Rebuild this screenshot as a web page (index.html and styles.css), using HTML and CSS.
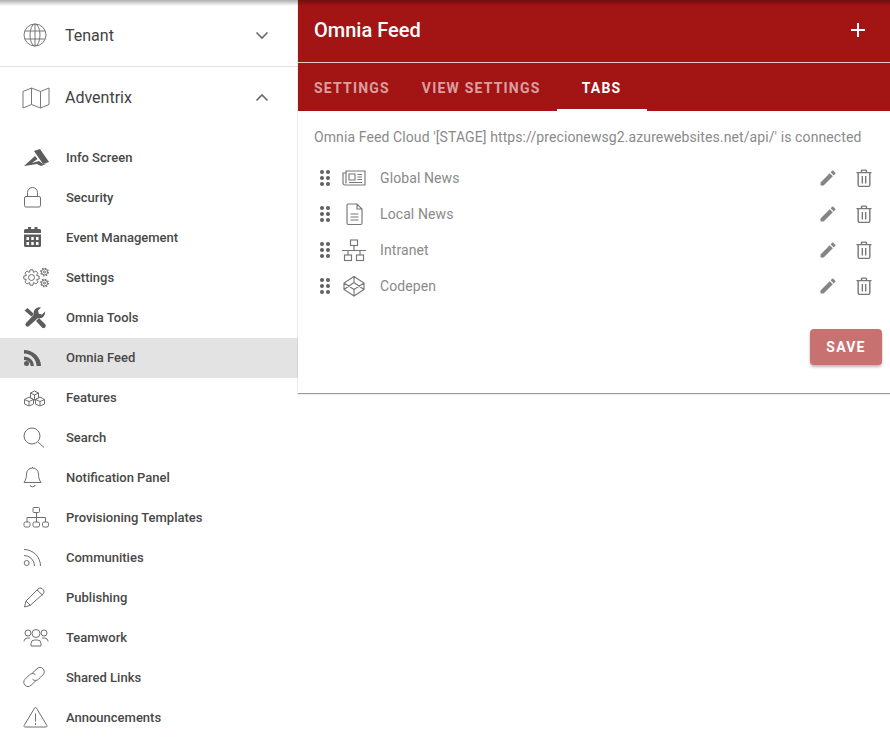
FILE: index.html
```html
<!DOCTYPE html>
<html lang="en">
<head>
<meta charset="utf-8">
<title>Omnia Feed</title>
<link rel="stylesheet" href="styles.css">
</head>
<body>
<div class="app">
  <nav class="sidebar">
    <div class="group group-tenant">
      <svg class="group-icon" viewBox="0 0 26 26"><circle cx="13" cy="13" r="11"/><ellipse cx="13" cy="13" rx="5" ry="11"/><path d="M3 9h20M3 17h20M13 2v22"/></svg>
      <span class="group-label">Tenant</span>
      <svg class="chev" viewBox="0 0 14 14"><path d="M1.5 4.5 7 10l5.5-5.5"/></svg>
    </div>
    <div class="group group-adv">
      <svg class="group-icon wide" viewBox="0 0 28 22"><path d="M1 4.5 9.500 1l9 3.500L27 1v16.500L18.500 21l-9-3.500L1 21zM9.500 1v16.500M18.500 4.500V21"/></svg>
      <span class="group-label">Adventrix</span>
      <svg class="chev" viewBox="0 0 14 14"><path d="M1.500 9.500 7 4l5.500 5.500"/></svg>
    </div>
    <ul class="menu">
      <li class="item"><span class="ico"><svg viewBox="0 0 26 26" class="solid"><path d="M11 7 17 5l9 13-6 2z"/><path d="M1 22 12 12l2.500 3L9 19l7-2 4 3 4-.5L18 22l-4-2z"/></svg></span><span>Info Screen</span></li>
      <li class="item"><span class="ico"><svg viewBox="0 0 26 26"><rect x="1.500" y="12.500" width="16" height="10.500" rx="1.500"/><path d="M4.500 12.500V8.500a5 5 0 0 1 10 0v4"/></svg></span><span>Security</span></li>
      <li class="item"><span class="ico"><svg viewBox="0 0 26 26" class="solid"><path fill-rule="evenodd" d="M5 3h3v2h3.500V3h3v2h1.500A1.500 1.500 0 0 1 18 6.500V9H1V6.500A1.500 1.500 0 0 1 2.500 5H5zM1 10.500h17V21.500a1.500 1.500 0 0 1-1.500 1.500h-14A1.500 1.500 0 0 1 1 21.500zM3.500 13v3H6v-3zm4.750 0v3h2.500v-3zm4.750 0v3H15.500v-3zM3.500 18v3H6v-3zm4.750 0v3h2.500v-3zm4.750 0v3H15.500v-3z"/></svg></span><span>Event Management</span></li>
      <li class="item"><span class="ico"><svg viewBox="0 0 26 26"><polygon transform="translate(8.500 13.500)" points="5.26,-1.920 7.660,-1.490 7.660,1.490 5.26,1.920 5.080,2.360 6.470,4.360 4.360,6.470 2.360,5.080 1.920,5.260 1.490,7.660 -1.490,7.660 -1.920,5.260 -2.360,5.080 -4.360,6.470 -6.470,4.360 -5.080,2.360 -5.260,1.920 -7.660,1.490 -7.660,-1.490 -5.260,-1.920 -5.080,-2.360 -6.470,-4.360 -4.360,-6.470 -2.360,-5.080 -1.920,-5.260 -1.490,-7.660 1.490,-7.660 1.920,-5.260 2.360,-5.080 4.360,-6.470 6.470,-4.360 5.080,-2.360"/><circle cx="8.500" cy="13.500" r="3"/><circle cx="21.500" cy="8" r="3"/><circle cx="21.500" cy="8" r="1"/><circle class="teeth" cx="21.500" cy="8" r="3.800"/><circle cx="21.500" cy="19" r="3"/><circle cx="21.500" cy="19" r="1"/><circle class="teeth" cx="21.500" cy="19" r="3.800"/></svg></span><span>Settings</span></li>
      <li class="item"><span class="ico"><svg viewBox="0 0 26 26" class="solid"><path d="M22 7.500l-3 3-3.200-.7-.8-3.200 3-3a5.500 5.500 0 0 0-7 7L3 19a2 2 0 0 0 3 3l9-8a5.500 5.500 0 0 0 7-6.500z"/><path d="M1.500 6.500 4.500 4l6.500 6-2.500 2.500zM13 17l3-3 6 6a2 2 0 0 1-3 3.500z"/></svg></span><span>Omnia Tools</span></li>
      <li class="item active"><span class="ico"><svg viewBox="0 0 26 26" class="solid"><circle cx="3.500" cy="19.500" r="2.500"/><path d="M1 6v3.500A12.500 12.500 0 0 1 13.500 22H18A17 16 0 0 0 1 6z"/><path d="M1 12.500V16a6 6 0 0 1 6.500 6H11A10 9.500 0 0 0 1 12.500z"/></svg></span><span>Omnia Feed</span></li>
      <li class="item"><span class="ico"><svg viewBox="0 0 26 26"><path d="M11.500 7l4 2v5l-4 2-4-2V9zM7.500 9l4 2 4-2M11.500 11v5"/><path d="M6 13l4.500 2.500V20L6 22l-4.500-2v-4.500zM1.500 15.500l4.500 2 4.500-2M6 17.500V22"/><path d="M17 13l4.500 2.500V20L17 22l-4.500-2v-4.500zM12.500 15.500l4.500 2 4.500-2M17 17.500V22"/></svg></span><span>Features</span></li>
      <li class="item"><span class="ico"><svg viewBox="0 0 26 26"><circle cx="9" cy="12" r="8"/><path d="M15 18l6 5.500"/></svg></span><span>Search</span></li>
      <li class="item"><span class="ico"><svg viewBox="0 0 26 26"><path d="M9.500 4a6 6 0 0 0-6 6c0 4-1 6.500-2.500 8.500h17c-1.500-2-2.500-4.500-2.500-8.500a6 6 0 0 0-6-6zM9.500 3v1M7 21a2.500 1.800 0 0 0 5 0"/></svg></span><span>Notification Panel</span></li>
      <li class="item"><span class="ico"><svg viewBox="0 0 26 26"><rect x="10" y="3.500" width="6.500" height="5" rx="1"/><rect x="1" y="18" width="6" height="5" rx="1.500"/><rect x="10" y="18" width="6.500" height="5" rx="1.500"/><rect x="19.500" y="18" width="6" height="5" rx="1.500"/><path d="M13.500 8.500V18M4 18v-4.500h18.500V18"/></svg></span><span>Provisioning Templates</span></li>
      <li class="item"><span class="ico"><svg viewBox="0 0 26 26"><circle cx="3.700" cy="19" r="2.500"/><path d="M1 11.500A10.500 10.500 0 0 1 11.500 22M1 5.500A16.500 16.500 0 0 1 17.500 22"/></svg></span><span>Communities</span></li>
      <li class="item"><span class="ico"><svg viewBox="0 0 26 26"><path d="M1.500 23 3 17 15 5a3 3 0 0 1 4-.5L20.500 6a3 3 0 0 1-.5 4L7 21.500zM3 17l4.500 4.500M14 6l5.500 5"/></svg></span><span>Publishing</span></li>
      <li class="item"><span class="ico"><svg viewBox="0 0 26 26"><circle cx="13" cy="9.500" r="4"/><circle cx="5" cy="9" r="3"/><circle cx="21" cy="9" r="3"/><path d="M8 22v-2.500a3.500 3.500 0 0 1 3.500-3.500h3a3.500 3.500 0 0 1 3.500 3.500V22zM1 17.500c0-2 1.500-3.500 3.500-3.500H7M25 17.500c0-2-1.500-3.500-3.500-3.500H19"/></svg></span><span>Teamwork</span></li>
      <li class="item"><span class="ico"><svg viewBox="0 0 26 26"><path d="M9 9.500 14 4.700a4.200 4.200 0 0 1 6 6l-4.500 4.500a4.200 4.200 0 0 1-6 0"/><path d="M13 16.500 8 21.300a4.200 4.200 0 0 1-6-6l4.500-4.500a4.200 4.200 0 0 1 6 0"/></svg></span><span>Shared Links</span></li>
      <li class="item"><span class="ico"><svg viewBox="0 0 26 26"><path d="M11.600 4a1 1 0 0 1 1.800 0l10.500 17.500a1 1 0 0 1-.9 1.500H2a1 1 0 0 1-.9-1.500zM12.500 9.500v8M12.500 19v2"/></svg></span><span>Announcements</span></li>
    </ul>
  </nav>
  <main class="panel">
    <header class="panel-head">
      <h1 class="panel-title">Omnia Feed</h1>
      <svg class="plus" viewBox="0 0 14 14"><path d="M7 0v14M0 7h14"/></svg>
    </header>
    <div class="tabs">
      <div class="tab">Settings</div>
      <div class="tab">View Settings</div>
      <div class="tab tab-on">Tabs</div>
    </div>
    <div class="panel-body">
      <p class="status">Omnia Feed Cloud '[STAGE] https://precionewsg2.azurewebsites.net/api/' is connected</p>
      <div class="rows">
        <div class="row">
          <span class="grip"><i></i><i></i><i></i><i></i><i></i><i></i></span>
          <svg class="row-ico" viewBox="0 0 24 24"><path d="M4 5h19v14H3a2 2 0 0 1-2-2V7h3zM4 5v12.500M7 8h6v6H7zM15.500 8.500H20M15.500 11H20M15.500 13.500H20M7 16.500h13"/></svg>
          <span class="row-name">Global News</span>
          <svg class="act pen" viewBox="0 0 24 24"><path d="M3 17.250V21h3.750L17.810 9.940l-3.750-3.750zM20.710 7.040a1 1 0 0 0 0-1.410l-2.340-2.340a1 1 0 0 0-1.410 0l-1.830 1.830 3.750 3.750z"/></svg>
          <svg class="act bin" viewBox="0 0 24 24"><path d="M3 5.500h18M9 5.500V3.500a1 1 0 0 1 1-1h4a1 1 0 0 1 1 1v2M5 5.500v15a1.500 1.500 0 0 0 1.500 1.500h11a1.500 1.500 0 0 0 1.500-1.500v-15M10 9.500v9M14 9.500v9"/></svg>
        </div>
        <div class="row">
          <span class="grip"><i></i><i></i><i></i><i></i><i></i><i></i></span>
          <svg class="row-ico" viewBox="0 0 24 24"><path d="M6 2h9l5 5v14a1.500 1.500 0 0 1-1.500 1.500h-12A1.500 1.500 0 0 1 5 21V3a1 1 0 0 1 1-1zM15 2v5h5M8.500 12h8M8.500 15h8M8.500 18h8"/></svg>
          <span class="row-name">Local News</span>
          <svg class="act pen" viewBox="0 0 24 24"><path d="M3 17.250V21h3.750L17.810 9.940l-3.750-3.750zM20.710 7.040a1 1 0 0 0 0-1.410l-2.340-2.340a1 1 0 0 0-1.410 0l-1.830 1.830 3.750 3.750z"/></svg>
          <svg class="act bin" viewBox="0 0 24 24"><path d="M3 5.500h18M9 5.500V3.500a1 1 0 0 1 1-1h4a1 1 0 0 1 1 1v2M5 5.500v15a1.500 1.500 0 0 0 1.500 1.500h11a1.500 1.500 0 0 0 1.500-1.500v-15M10 9.500v9M14 9.500v9"/></svg>
        </div>
        <div class="row">
          <span class="grip"><i></i><i></i><i></i><i></i><i></i><i></i></span>
          <svg class="row-ico" viewBox="0 0 24 24"><rect x="8.500" y="2" width="7" height="5.500"/><rect x="2.500" y="17" width="7" height="5.500"/><rect x="14.500" y="17" width="7" height="5.500"/><path d="M12 7.500v5M0 12.500h24M6 12.500V17M18 12.500V17"/></svg>
          <span class="row-name">Intranet</span>
          <svg class="act pen" viewBox="0 0 24 24"><path d="M3 17.250V21h3.750L17.810 9.940l-3.750-3.750zM20.710 7.040a1 1 0 0 0 0-1.410l-2.340-2.340a1 1 0 0 0-1.410 0l-1.830 1.830 3.750 3.750z"/></svg>
          <svg class="act bin" viewBox="0 0 24 24"><path d="M3 5.500h18M9 5.500V3.500a1 1 0 0 1 1-1h4a1 1 0 0 1 1 1v2M5 5.500v15a1.500 1.500 0 0 0 1.500 1.500h11a1.500 1.500 0 0 0 1.500-1.500v-15M10 9.500v9M14 9.500v9"/></svg>
        </div>
        <div class="row">
          <span class="grip"><i></i><i></i><i></i><i></i><i></i><i></i></span>
          <svg class="row-ico" viewBox="0 0 24 24"><path d="M12 2.500 22 9v6.500l-10 6.500-10-6.500V9zM12 2.500V8.500M12 15.500V22M2 9l10 6.500L22 9M2 15.500 12 8.500l10 7"/></svg>
          <span class="row-name">Codepen</span>
          <svg class="act pen" viewBox="0 0 24 24"><path d="M3 17.250V21h3.750L17.810 9.940l-3.750-3.750zM20.710 7.040a1 1 0 0 0 0-1.410l-2.340-2.340a1 1 0 0 0-1.410 0l-1.830 1.830 3.750 3.750z"/></svg>
          <svg class="act bin" viewBox="0 0 24 24"><path d="M3 5.500h18M9 5.500V3.500a1 1 0 0 1 1-1h4a1 1 0 0 1 1 1v2M5 5.500v15a1.500 1.500 0 0 0 1.500 1.500h11a1.500 1.500 0 0 0 1.500-1.500v-15M10 9.500v9M14 9.500v9"/></svg>
        </div>
      </div>
      <div class="actions"><button class="save" type="button">Save</button></div>
    </div>
  </main>
</div>
</body>
</html>
```
FILE: styles.css
```css
* { box-sizing: border-box; }
html, body { margin: 0; height: 738px; overflow: hidden; background: #fff; }
body { font-family: Roboto, "Liberation Sans", sans-serif; color: #444; position: relative; }
body::before {
  content: ""; position: absolute; left: 0; right: 0; top: 0; height: 6px; z-index: 2;
  background: linear-gradient(to bottom, rgba(0,0,0,.32), rgba(0,0,0,0));
}
.app { display: flex; align-items: flex-start; height: 738px; }
.sidebar { width: 298px; flex: none; height: 738px; overflow: hidden; }
svg { display: block; fill: none; stroke: #6e6e6e; stroke-width: 1; }
.group { display: flex; align-items: center; padding: 0 22px; }
.group-tenant { height: 67px; padding-top: 4px; border-bottom: 1px solid #e0e0e0; }
.group-adv { height: 71px; padding-bottom: 10px; }
.group-icon { width: 26px; height: 26px; flex: none; margin-right: 17px; stroke: #777; }
.group-icon.wide { width: 28px; height: 22px; margin-right: 15px; }
.group-label { font-size: 16px; color: #424242; flex: 1; }
.chev { width: 14px; height: 14px; stroke: #6a6a6a; stroke-width: 1.600; margin-right: 7px; }
.menu { list-style: none; margin: 0; padding: 0; }
.item { display: flex; align-items: center; height: 40px; padding: 0 0 2px 23px; font-size: 13px; font-weight: 500; color: #484848; }
.item.active { background: #e3e3e3; }
.ico { width: 26px; height: 26px; flex: none; margin-right: 17px; }
.ico svg { width: 26px; height: 26px; }
.solid { fill: #5c5c5c; stroke: none; }
.teeth { stroke-width: 1.200; stroke-dasharray: 1.500 1.480; }
.panel {
  flex: 1; height: 393px; background: #fff;
  box-shadow: 0 1px 1px rgba(0,0,0,.4);
}
.panel-head { height: 63px; background: #a31414; border-bottom: 1px solid #e6c8c8; display: flex; align-items: center; justify-content: space-between; padding: 0 25px 2px 16px; }
.panel-title { margin: 0; font-size: 20px; font-weight: 500; color: #fff; }
.plus { width: 14px; height: 14px; stroke: #fff; stroke-width: 2; }
.tabs { height: 48px; background: #a31414; display: flex; }
.tab { min-width: 90px; padding: 1px 16px 0; display: flex; align-items: center; justify-content: center; font-size: 14px; font-weight: 700; letter-spacing: 1.200px; text-transform: uppercase; color: rgba(255,255,255,.6); }
.tab-on { color: #fff; box-shadow: inset 0 -2px 0 #fff; }
.panel-body { padding: 18px 8px 0 16px; }
.status { margin: 0; font-size: 14px; line-height: 16px; color: #8a8a8a; letter-spacing: .1px; }
.rows { margin-top: 15px; }
.row { display: flex; align-items: center; height: 36px; font-size: 14px; color: #8a8a8a; padding-left: 6px; }
.grip { width: 10px; height: 16px; display: grid; grid-template-columns: 4px 4px; grid-template-rows: repeat(3, 4px); gap: 2px 2px; flex: none; margin-right: 12px; }
.grip i { background: #5f5f5f; border-radius: 50%; }
.row-ico { width: 24px; height: 24px; flex: none; margin-right: 14px; stroke: #777; stroke-width: 1.150; }
.row-name { flex: 1; letter-spacing: .1px; }
.act { flex: none; width: 20px; height: 20px; }
.pen { fill: #858585; stroke: none; margin-right: 16px; }
.bin { stroke: #777; stroke-width: 1.700; margin-right: 8px; }
.actions { display: flex; justify-content: flex-end; margin-top: 25px; }
.save { width: 72px; height: 36px; border: 0; border-radius: 4px; background: #c87171; color: #fff; font: 700 14px Roboto, sans-serif; letter-spacing: 1.200px; text-transform: uppercase; box-shadow: 0 2px 3px rgba(0,0,0,.28); padding: 0; }
```
